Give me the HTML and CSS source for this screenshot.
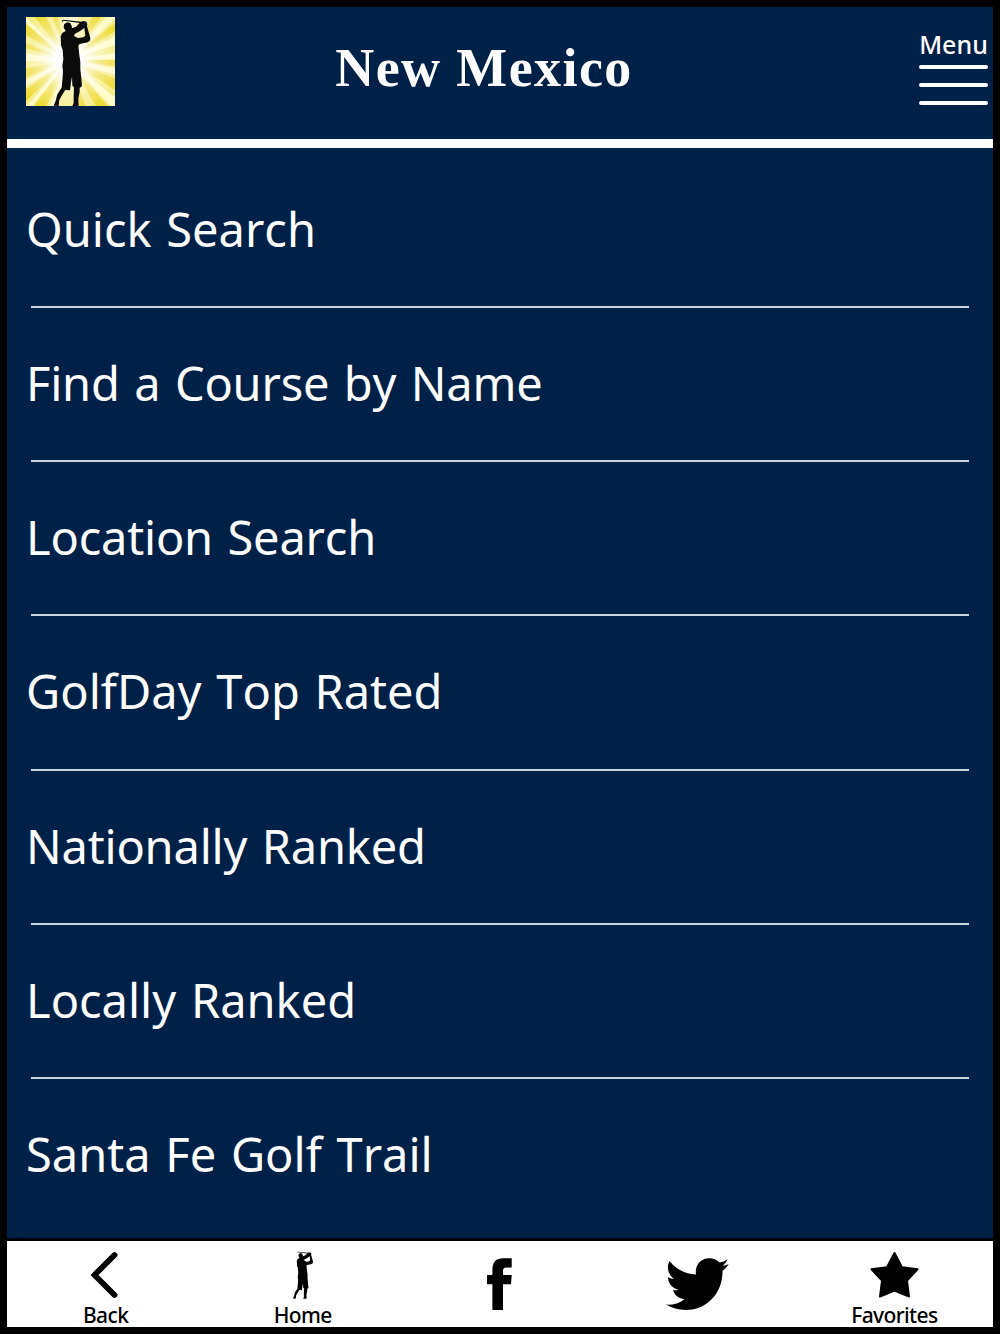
FILE: index.html
```
<!DOCTYPE html>
<html lang="en">
<head>
  <meta charset="UTF-8">
  <meta name="viewport" content="width=device-width, initial-scale=1.0">
  <title>New Mexico</title>
  <link rel="stylesheet" href="styles.css">
</head>
<body>
  <!-- shared golfer shape, used by the logo and the home button -->
  <svg class="defs" width="0" height="0">
    <defs>
      <path id="golfer" d="M187 66L185 62L191 59L243 65L250 63L259 65L262 72L261 79L266 96L271 114L270 122L264 127L239 132L235 137L238 165L241 185L241 208L244 234L246 259L239 264L239 276L235 296L236 318L217 318L221 309L221 287L222 262L217 257L216 230L213 247L210 271L196 270L188 282L178 300L176 318L161 317L167 302L172 283L185 263L188 230L189 212L187 198L190 178L188 150L183 136L182 109L187 99L197 93L191 83L192 73L201 67L211 69L216 80L215 85L228 80L239 69L191 62ZM253 84L239 94L224 102L222 108L234 114L250 112L256 107Z"/>
    </defs>
  </svg>
  <div class="app">
    <header class="header">
      <svg class="logo" viewBox="78 51 267 267">
        <defs>
          <radialGradient id="glow" gradientUnits="userSpaceOnUse" cx="205" cy="180" r="180">
            <stop offset="0.22" stop-color="#fff"/>
            <stop offset="0.5" stop-color="#fff" stop-opacity="0.45"/>
            <stop offset="0.9" stop-color="#fff" stop-opacity="0"/>
          </radialGradient>
        </defs>
        <rect x="78" y="51" width="267" height="267" fill="#f6ed86"/>
        <g fill="#eedb35">
          <path d="M205 180L78 72V105ZM205 180L78 130V146ZM205 180L78 205V232ZM205 180L78 268V304ZM205 180L102 318H140ZM205 180L104 51H139ZM205 180L157 51H174ZM205 180L278 51H304ZM205 180L345 70V94ZM205 180L345 180V198ZM205 180L345 236V270ZM205 180L322 318H288ZM205 180L257 318H238Z"/>
        </g>
        <g fill="#fffbc8">
          <path d="M205 180L78 51V68ZM205 180L78 160V184ZM205 180L78 240V258ZM205 180L80 318H98ZM205 180L150 318H176ZM205 180L186 51H235ZM205 180L318 51H345V58ZM205 180L345 108V135ZM205 180L345 160V178ZM205 180L345 204V225ZM205 180L345 292V318H332Z"/>
        </g>
        <rect x="78" y="51" width="267" height="267" fill="url(#glow)"/>
        <use href="#golfer" fill="#0b0b0b"/>
      </svg>
      <h1 class="title">New Mexico</h1>
      <div class="menu">
        <span class="menu-label">Menu</span>
        <span class="bar"></span>
        <span class="bar"></span>
        <span class="bar"></span>
      </div>
    </header>
    <ul class="list">
      <li class="item">Quick Search</li>
      <li class="item tight">Find a Course by Name</li>
      <li class="item tight">Location Search</li>
      <li class="item">GolfDay Top Rated</li>
      <li class="item tight">Nationally Ranked</li>
      <li class="item">Locally Ranked</li>
      <li class="item">Santa Fe Golf Trail</li>
    </ul>
    <nav class="footer">
      <div class="tab">
        <svg class="icon" width="30" height="50" viewBox="0 0 30 50"><path d="M23.5 5L3.5 25L23.5 45" fill="none" stroke="#000" stroke-width="5.8" stroke-linecap="round"/></svg>
        <span>Back</span>
      </div>
      <div class="tab">
        <svg class="icon" width="20" height="50" viewBox="161 50 110 275"><use href="#golfer"/></svg>
        <span>Home</span>
      </div>
      <div class="tab tab-social">
        <svg width="25" height="52" viewBox="0 0 25 52"><path d="M5.4 52V26.2H0V17H5.4V12C5.4 4 9 .3 16.5.3H24.7V9.5H19.5Q16 9.5 16 12.8V17H24.7L24 26.2H16V52Z"/></svg>
      </div>
      <div class="tab tab-social">
        <svg width="63" height="52" viewBox="0 0 63 52"><path d="M3.5 3C10 11 19 16.200 30 16.500C28.500 7 35 .2 43 .2C48 .2 51 2 53.500 4.500C56.500 4 59 3 61.500 1.200C60.500 4 58.500 6.200 56.500 7.500C58.500 7.500 60.500 7 62.700 6C61 9 59 11 56.500 12.800C57 34 42 52 20 52C12 52 5.500 50 0 46.600C7 47 13 45.500 18.500 41.200C12.500 40.500 8.500 37 7 32.200C9 32.500 11 32.400 12.500 31.800C6 30 2.200 25.500 2 19.300C4 20.300 6 20.800 8 21C2 16.500 .2 9.500 3.500 3Z"/></svg>
      </div>
      <div class="tab">
        <svg class="icon" width="50" height="50" viewBox="0 0 50 50"><path d="M25.5 3L33 17.3L48.5 19.3L38 30.500L40 46.500L25.500 40.500L11 46.500L13 30.500L2.500 19.300L18 17.3Z" stroke="#000" stroke-width="2" stroke-linejoin="round"/></svg>
        <span>Favorites</span>
      </div>
    </nav>
  </div>
</body>
</html>
```
FILE: styles.css
```
* {
  box-sizing: border-box;
}
body {
  margin: 0;
  background-color: #000;
  font-family: "Noto Sans", sans-serif;
}
.defs {
  display: block;
}
/* black frame around the whole screen */
.app {
  display: flex;
  flex-direction: column;
  width: 1000px;
  height: 1334px;
  padding: 7px;
  background-color: #000;
}
/* header */
.header {
  display: flex;
  justify-content: space-between;
  flex: none;
  height: 141px;
  padding: 10px 5px 0 19px;
  border-bottom: 9px solid #fff;
  background-color: #002147;
}
.logo {
  width: 89px;
  height: 89px;
}
.title {
  margin: 19px 0 0;
  padding-right: 66px;
  color: #fff;
  font-family: "Liberation Serif", serif;
  font-size: 54px;
  font-weight: bold;
  line-height: 64px;
  letter-spacing: 1.4px;
  white-space: nowrap;
}
.menu {
  display: flex;
  flex-direction: column;
  gap: 14px;
  width: 69px;
  padding-top: 12px;
}
.menu-label {
  height: 22px;
  color: #fff;
  font-size: 25px;
  font-weight: 500;
  line-height: 30px;
  text-align: center;
}
.bar {
  height: 4px;
  border-radius: 2px;
  background-color: #fff;
}
/* links */
.list {
  display: flex;
  flex-direction: column;
  flex: none;
  height: 1090px;
  margin: 0;
  padding: 5.8px 24px 0;
  list-style: none;
  background-color: #002147;
}
.item {
  flex: none;
  height: 154.2px;
  border-bottom: 2px solid #c9d5dc;
  color: #fff;
  font-size: 47px;
  font-kerning: none;
  line-height: 151px;
  text-indent: -5px;
  white-space: nowrap;
  word-spacing: 2.5px;
}
.item.tight {
  letter-spacing: -0.2px;
}
.item:last-child {
  border-bottom: none;
}
/* bottom bar */
.footer {
  display: grid;
  grid-template-columns: repeat(5, 1fr);
  flex: none;
  height: 86px;
  margin-top: 3px;
  background-color: #fff;
}
.tab {
  display: flex;
  flex-direction: column;
  align-items: center;
  padding-top: 9px;
  color: #000;
  font-size: 21px;
  font-weight: 500;
  line-height: 30px;
  letter-spacing: -0.6px;
}
.tab-social {
  padding-top: 17px;
}
```
